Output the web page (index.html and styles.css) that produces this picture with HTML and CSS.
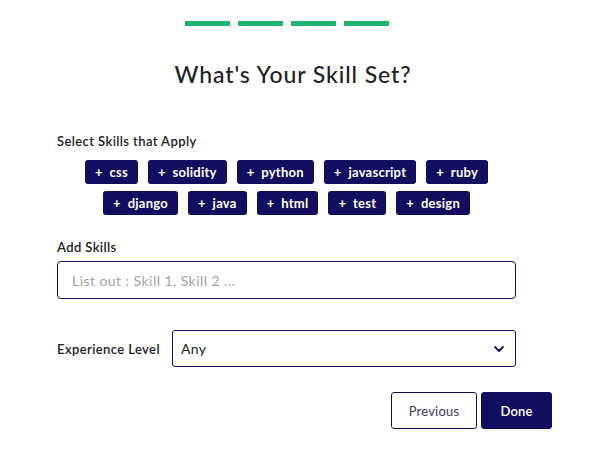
FILE: index.html
```html
<!DOCTYPE html>
<html>
<head>
<meta charset="utf-8">
<link rel="stylesheet" href="styles.css">
</head>
<body>
<div class="page">
  <div class="progress">
    <span class="step"></span><span class="step"></span><span class="step"></span><span class="step"></span>
  </div>
  <h1 class="title">What's Your Skill Set?</h1>
  <div class="form">
    <div class="label label-select">Select Skills that Apply</div>
    <div class="chips">
      <div class="chip-row">
        <span class="chip">+&nbsp; css</span>
        <span class="chip">+&nbsp; solidity</span>
        <span class="chip">+&nbsp; python</span>
        <span class="chip">+&nbsp; javascript</span>
        <span class="chip">+&nbsp; ruby</span>
      </div>
      <div class="chip-row">
        <span class="chip">+&nbsp; django</span>
        <span class="chip">+&nbsp; java</span>
        <span class="chip">+&nbsp; html</span>
        <span class="chip">+&nbsp; test</span>
        <span class="chip">+&nbsp; design</span>
      </div>
    </div>
    <div class="label label-add">Add Skills</div>
    <div class="input"><span class="placeholder">List out : Skill 1, Skill 2 ...</span></div>
    <div class="exp-row">
      <div class="label exp-label">Experience Level</div>
      <div class="select">
        <span class="select-value">Any</span>
        <svg class="chevron" width="10" height="6" viewBox="0 0 10 6"><path d="M1 1 L5 5 L9 1" fill="none" stroke="#120d5e" stroke-width="1.8" stroke-linecap="round" stroke-linejoin="round"/></svg>
      </div>
    </div>
    <div class="actions">
      <button class="btn btn-prev">Previous</button>
      <button class="btn btn-done">Done</button>
    </div>
  </div>
</div>
</body>
</html>
```
FILE: styles.css
```css
* { box-sizing: border-box; }
html, body { margin: 0; padding: 0; background: #fff; }
body { font-family: Lato, "Open Sans", sans-serif; color: #222; }
.page { width: 600px; height: 461px; padding-top: 21px; }
.progress { display: flex; justify-content: center; gap: 8px; width: 459px; margin-left: 57px; }
.step { display: block; width: 45px; height: 5px; background: #1fb36f; }
.title { margin: 34px 0 0; padding-right: 14px; text-align: center; font-size: 23px; line-height: 28px; font-weight: 500; color: #222; letter-spacing: 0.9px; }
.form { margin-left: 57px; width: 495px; }
.label { font-size: 13px; line-height: 16px; font-weight: 600; color: #222; letter-spacing: 0.4px; }
.label-select { margin-top: 45px; }
.chips { width: 459px; margin-top: 11px; display: flex; flex-direction: column; gap: 7px; }
.chip-row { display: flex; justify-content: center; gap: 10px; }
.chip { display: inline-flex; align-items: center; height: 24px; padding: 0 10px; background: #120d5e; color: #fff; border-radius: 3px; font-size: 13px; font-weight: 700; letter-spacing: 0.25px; }
.label-add { margin-top: 24px; }
.input { width: 459px; height: 38px; margin-top: 6px; border: 1px solid #120d5e; border-radius: 4px; display: flex; align-items: center; padding-left: 14px; }
.placeholder { font-size: 14px; color: #a3a3a3; letter-spacing: 0.45px; }
.exp-row { display: flex; align-items: center; margin-top: 31px; width: 459px; }
.exp-label { width: 115px; }
.select { flex: 1; height: 37px; border: 1px solid #120d5e; border-radius: 3px; display: flex; align-items: center; justify-content: space-between; padding: 0 11px 0 8px; }
.select-value { font-size: 14px; color: #222; letter-spacing: 0.3px; }
.chevron { display: block; }
.actions { display: flex; justify-content: flex-end; gap: 4px; margin-top: 25px; }
.btn { height: 37px; border-radius: 3px; font-family: Lato, "Open Sans", sans-serif; font-size: 13px; cursor: pointer; }
.btn-prev { width: 86px; background: #fff; border: 1px solid #120d5e; color: #3a3a5a; letter-spacing: 0.2px; }
.btn-done { width: 71px; background: #120d5e; border: 1px solid #120d5e; color: #fff; font-weight: 600; letter-spacing: 0.2px; }
```
